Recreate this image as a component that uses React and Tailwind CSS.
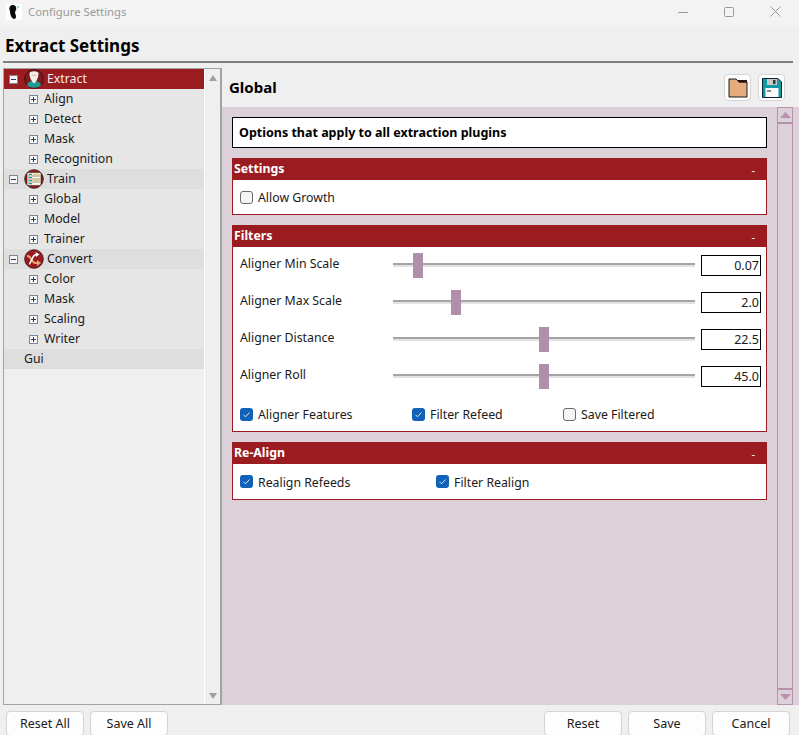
import React from "react";

const FONT = "font-['Noto_Sans','Open_Sans',sans-serif]";

/* =========================
   TREE + FORM DATA
========================== */
const TREE = [
  { name: "Extract", icon: "extract", selected: true, children: ["Align", "Detect", "Mask", "Recognition"] },
  { name: "Train", icon: "train", children: ["Global", "Model", "Trainer"] },
  { name: "Convert", icon: "convert", children: ["Color", "Mask", "Scaling", "Writer"] },
];

const SLIDERS = [
  { label: "Aligner Min Scale", value: "0.07", left: 20 },
  { label: "Aligner Max Scale", value: "2.0", left: 58 },
  { label: "Aligner Distance", value: "22.5", left: 146 },
  { label: "Aligner Roll", value: "45.0", left: 146 },
];

function AppLogo() {
  return (
    <svg width="16" height="16" viewBox="0 0 16 16" className="shrink-0">
      <rect width="16" height="16" fill="#fff" />
      <path d="M6 1 C3 2 3 5 4 7 C4 10 5 14 8 15 C11 15 10 11 9 9 C9 7 11 5 10 3 C9 1 7 1 6 1 Z" fill="#0b0b0b" />
      <circle cx="12" cy="3" r="1" fill="#7ed69a" />
      <circle cx="11" cy="6" r="0.7" fill="#b4e6c4" />
    </svg>
  );
}

function Expander({ open }) {
  return (
    <svg width="9" height="9" viewBox="0 0 9 9" className="shrink-0">
      <rect x="0.5" y="0.5" width="8" height="8" fill="#f7f7f7" stroke="#7d8594" />
      <path d="M2 4.5H7" stroke="#2b3a55" />
      {!open && <path d="M4.5 2V7" stroke="#2b3a55" />}
    </svg>
  );
}

function TreeIcon({ kind }) {
  return (
    <svg width="20" height="20" viewBox="0 0 20 20" className="shrink-0">
      <circle cx="10" cy="10" r="9.3" fill={kind === "extract" ? "#7d1a1e" : "#9b1c20"} stroke="#2a1010" strokeWidth="0.8" />
      {kind === "extract" && (
        <>
          <path d="M3 16 C4 12.500 7 12 10 12 C13 12 16 12.500 17 16 C15 19.500 5 19.500 3 16 Z" fill="#1f9a94" />
          <path d="M5.500 4.500 C5.500 1.500 14.500 1.500 14.500 4.500 C14.500 9 12 13 10 14.500 C8 13 5.500 9 5.500 4.500 Z" fill="#f6f1ea" />
          <path d="M7.500 5.500H12.500V7H7.500Z" fill="#e5c7ae" />
        </>
      )}
      {kind === "train" && (
        <>
          <rect x="3" y="3.500" width="14" height="13" rx="1" fill="#f7f4e6" stroke="#2a1010" strokeWidth="0.5" />
          <path d="M3.500 7H16.500M3.500 10H16.500M3.500 13H16.500" stroke="#6a5b4a" strokeWidth="0.6" />
          <path d="M4.500 5.300H8M4.500 8.500H8M4.500 11.500H8M4.500 14.700H8" stroke="#18a0a0" strokeWidth="1.200" />
          <path d="M9 5.300H15.500M9 11.500H15.500" stroke="#e9bb5c" strokeWidth="1" />
        </>
      )}
      {kind === "convert" && (
        <>
          <path d="M3 7 C7 6 8 14 11 14 L14 14" fill="none" stroke="#e3a878" strokeWidth="2" />
          <path d="M13 11 L17 14 L13 17 Z" fill="#e3a878" />
          <path d="M5 15 C7 15 8 6 12 5.500" fill="none" stroke="#fff" strokeWidth="1.600" />
          <path d="M11.500 3 L15.500 5.200 L12 8 Z" fill="#fff" />
        </>
      )}
    </svg>
  );
}

function Checkbox({ checked }) {
  if (!checked) {
    return <span className="w-[13px] h-[13px] shrink-0 rounded-[3px] border border-[#6b6b6b] bg-[#f5f5f5]" />;
  }
  return (
    <svg width="13" height="13" viewBox="0 0 13 13" className="shrink-0">
      <rect width="13" height="13" rx="3" fill="#0f62b8" />
      <path d="M3.500 6.800 L5.500 8.800 L9.500 4.500" fill="none" stroke="#dfeaf6" strokeWidth="1" />
    </svg>
  );
}

function CheckItem({ label, checked, className = "" }) {
  return (
    <label className={`flex items-center gap-[5px] text-[12.3px] leading-[20px] text-[#1a1a1a] ${className}`}>
      <Checkbox checked={checked} />
      <span className="translate-y-[1px]">{label}</span>
    </label>
  );
}

function Section({ title, children }) {
  return (
    <section>
      <div className="h-[22px] bg-[#9b1c20] flex items-center justify-between pl-[2px] pr-[12px] text-white text-[12.3px] font-bold leading-none">
        <span>{title}</span>
        <span className="font-normal text-[11px]">-</span>
      </div>
      <div className="bg-white border border-t-0 border-[#9b1c20]">{children}</div>
    </section>
  );
}

function SliderRow({ label, value, left }) {
  return (
    <div className="h-[37px] flex items-center pl-[7px] pr-[5px] pb-[1px]">
      <span className="w-[153px] pb-[2px] text-[12.3px] text-[#1a1a1a]">{label}</span>
      <div className="relative w-[302px] h-[4px] border-t-2 border-[#a5a5a5] bg-[#e2e2e2]">
        <span className="absolute -top-[12px] w-[10px] h-[25px] bg-[#b08fab]" style={{ left }} />
      </div>
      <div className="ml-[6px] w-[60px] h-[21px] border border-black bg-white text-right pr-[1px] text-[12.5px] leading-[20px] text-[#1a1a1a]">
        {value}
      </div>
    </div>
  );
}

function FooterButton({ children }) {
  return (
    <button className="w-[78px] h-[25px] pt-[1px] rounded-[4px] border border-[#d3d3d3] bg-[#fdfdfd] text-[12.5px] leading-none text-[#1a1a1a]">
      {children}
    </button>
  );
}

function Arrow({ up, color, width = 8, height = 6 }) {
  return (
    <svg width={width} height={height} viewBox="0 0 8 5" preserveAspectRatio="none">
      <path d={up ? "M4 0L8 5H0Z" : "M0 0H8L4 5Z"} fill={color} />
    </svg>
  );
}

function App() {
  return (
    <div className={`w-[799px] h-[735px] overflow-hidden flex flex-col bg-[#efefef] ${FONT}`}>
      {/* TITLE BAR */}
      <div className="h-[27px] shrink-0 bg-[#f3f3f3] flex items-center pl-[6px] pb-[4px]">
        <AppLogo />
        <span className="ml-[6px] pt-[2px] text-[11.3px] text-[#9a9a9a]">Configure Settings</span>
        <div className="ml-auto flex items-center gap-[36px] pr-[18px]">
          <svg width="10" height="10" viewBox="0 0 10 10"><path d="M0 5.500H10" stroke="#999" /></svg>
          <svg width="10" height="10" viewBox="0 0 10 10"><rect x="0.500" y="0.500" width="9" height="9" rx="1" fill="none" stroke="#999" /></svg>
          <svg width="11" height="11" viewBox="0 0 11 11"><path d="M0.500 0.500L10.500 10.500M10.500 0.500L0.500 10.500" stroke="#999" /></svg>
        </div>
      </div>

      {/* PAGE HEADER */}
      <div className="h-[36px] shrink-0 ml-[3px] mr-[6px] pl-[2px] border-b-2 border-[#7f7f7f] flex items-center pt-[3px]">
        <h1 className="text-[17px] font-bold text-black">Extract Settings</h1>
      </div>

      <div className="h-[637px] mt-[5px] shrink-0 flex ml-[3px]">
        {/* TREE */}
        <div className="w-[219px] shrink-0 border border-[#a3a3a3] border-r-2 flex">
          <div className="flex-1 text-[12.3px] leading-[20px] text-[#1a1a1a]">
            {TREE.map((group) => (
              <div key={group.name}>
                <div
                  className={
                    group.selected
                      ? "h-[20px] flex items-center pl-[5px] bg-[#9b1c20] text-[#f6eeee]"
                      : "h-[20px] flex items-center pl-[5px] bg-[#dedede]"
                  }
                >
                  <Expander open />
                  <span className="ml-[6px]"><TreeIcon kind={group.icon} /></span>
                  <span className="ml-[3px]">{group.name}</span>
                </div>
                {group.children.map((child) => (
                  <div key={child} className="h-[20px] flex items-center pl-[25px] bg-[#e6e6e6]">
                    <Expander />
                    <span className="ml-[6px]">{child}</span>
                  </div>
                ))}
              </div>
            ))}
            <div className="h-[20px] flex items-center pl-[20px] bg-[#dedede]">
              <span>Gui</span>
            </div>
          </div>
          <div className="w-[16px] shrink-0 border-l border-white flex flex-col items-center justify-between pt-[6px] pb-[5px]">
            <Arrow up color="#a0a0a0" />
            <Arrow color="#a0a0a0" />
          </div>
        </div>

        {/* RIGHT PANE */}
        <div className="flex-1 flex flex-col min-w-0">
          <div className="h-[39px] shrink-0 flex items-center pl-[7px] pr-[14px]">
            <h2 className="text-[15px] font-bold text-black">Global</h2>
            <div className="ml-auto flex gap-[7px]">
              <button className="w-[27px] h-[27px] rounded-[4px] border border-[#d5d5d5] bg-white flex items-center justify-center">
                <svg width="20" height="20" viewBox="0 0 20 20">
                  <path d="M1 1H8L11 4H19V19H1Z" fill="#e5ad7e" stroke="#1a1a1a" />
                  <path d="M9 2H19V4.500H11Z" fill="#2a1410" />
                </svg>
              </button>
              <button className="w-[27px] h-[27px] rounded-[4px] border border-[#d5d5d5] bg-white flex items-center justify-center">
                <svg width="20" height="20" viewBox="0 0 20 20">
                  <path d="M0.500 0.500H16L19.500 4V19.500H0.500Z" fill="#119aa4" stroke="#123" />
                  <rect x="5" y="1" width="10" height="6" fill="#c9c9c9" />
                  <rect x="11" y="2" width="2.500" height="4" fill="#333" />
                  <rect x="3.500" y="10" width="13" height="9" fill="#fafafa" />
                  <rect x="5" y="12" width="4" height="2" fill="#888" />
                </svg>
              </button>
            </div>
          </div>

          <div className="flex-1 flex bg-[#dcd0d9] pl-[10px] pr-[6px] min-h-0">
            <div className="flex-1 pt-[10px] pr-[10px] flex flex-col gap-[10px] min-w-0">
              <div className="h-[31px] border-[1.5px] border-black bg-white flex items-center pl-[6px] pt-[1px] text-[12.5px] font-bold text-black">
                Options that apply to all extraction plugins
              </div>

              <Section title="Settings">
                <div className="h-[34px] flex items-center pl-[7px]">
                  <CheckItem label="Allow Growth" />
                </div>
              </Section>

              <Section title="Filters">
                {SLIDERS.map((s) => (
                  <SliderRow key={s.label} {...s} />
                ))}
                <div className="flex items-center pl-[7px] pt-[9px] pb-[7px]">
                  <CheckItem label="Aligner Features" checked className="w-[172px]" />
                  <CheckItem label="Filter Refeed" checked className="w-[151px]" />
                  <CheckItem label="Save Filtered" />
                </div>
              </Section>

              <Section title="Re-Align">
                <div className="h-[35px] flex items-center pl-[7px]">
                  <CheckItem label="Realign Refeeds" checked className="w-[196px]" />
                  <CheckItem label="Filter Realign" checked />
                </div>
              </Section>
            </div>

            {/* PANEL SCROLLBAR */}
            <div className="w-[16px] shrink-0 border border-[#b891ae] flex flex-col justify-between">
              <div className="h-[16px] border-b-2 border-[#b891ae] flex items-center justify-center">
                <Arrow up color="#b891ae" width={11} height={6} />
              </div>
              <div className="h-[16px] border-t-2 border-[#b891ae] flex items-center justify-center">
                <Arrow color="#b891ae" width={11} height={6} />
              </div>
            </div>
          </div>
        </div>
      </div>

      {/* FOOTER BUTTONS */}
      <div className="mt-[6px] flex pl-[6px] pr-[9px] gap-[6px]">
        <FooterButton>Reset All</FooterButton>
        <FooterButton>Save All</FooterButton>
        <div className="ml-auto flex gap-[6px]">
          <FooterButton>Reset</FooterButton>
          <FooterButton>Save</FooterButton>
          <FooterButton>Cancel</FooterButton>
        </div>
      </div>
    </div>
  );
}

export default App;
